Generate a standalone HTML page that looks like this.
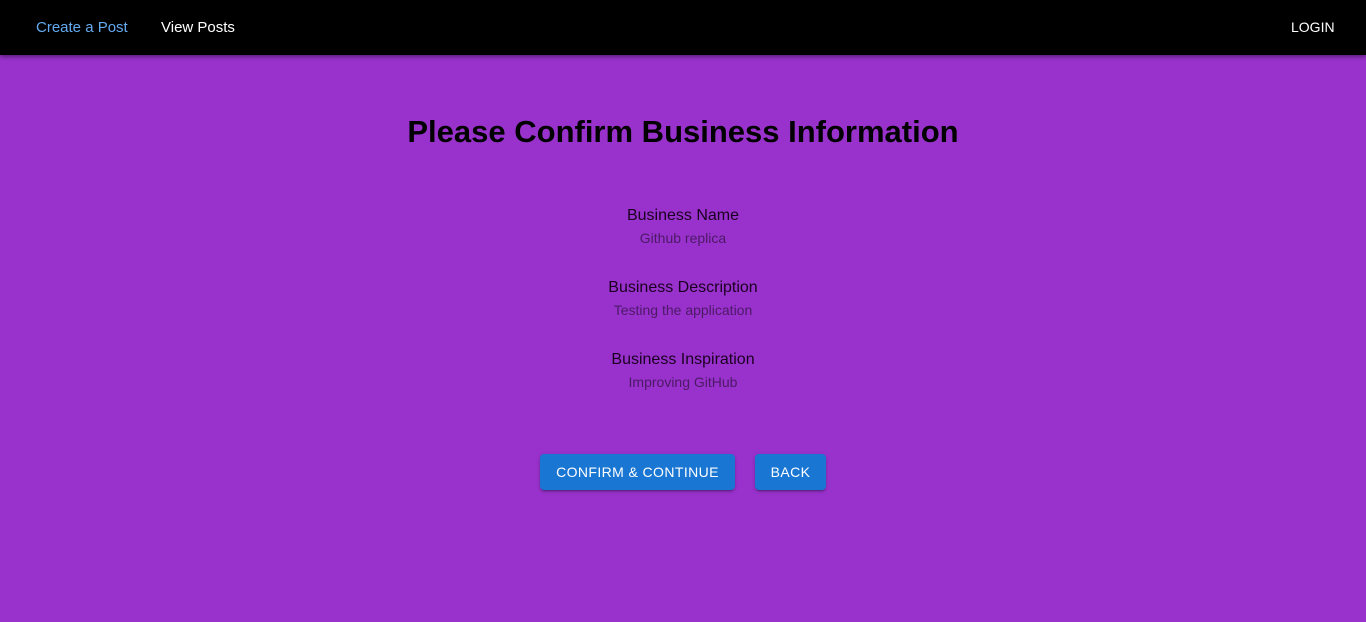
<!DOCTYPE html>
<html><head><style>
body{margin:0;width:1366px;height:622px;background:#9932cc;font-family:"Liberation Sans",sans-serif;overflow:hidden;position:relative}
.nav{position:absolute;top:0;left:0;width:1366px;height:55px;background:#000;box-shadow:0 2px 4px rgba(0,0,0,.4)}
.nav span{position:absolute;top:19px;font-size:15px}
h1{position:absolute;top:114px;left:0;width:1366px;margin:0;text-align:center;font-size:31px;font-weight:bold;color:#000}
.g{position:absolute;left:0;width:1366px;text-align:center}
.l{font-size:16px;color:#1a0020;height:20px}
.v{font-size:14px;color:rgba(0,0,0,.5);margin-top:3px}
.b{position:absolute;top:454px;height:36px;background:#1976d2;color:#fff;font-size:14px;font-weight:500;letter-spacing:.4px;border-radius:4px;box-shadow:0 3px 1px -2px rgba(0,0,0,.2),0 2px 2px rgba(0,0,0,.14),0 1px 5px rgba(0,0,0,.12);display:flex;align-items:center;justify-content:center}
</style></head><body>
<div class="nav"><span style="left:36px;color:#64aaf0">Create a Post</span><span style="left:161px;color:#fff">View Posts</span><span style="left:1291px;color:#fff;font-size:14px;top:19px">LOGIN</span></div>
<h1>Please Confirm Business Information</h1>
<div class="g" style="top:207px"><div class="l">Business Name</div><div class="v">Github replica</div></div>
<div class="g" style="top:279px"><div class="l">Business Description</div><div class="v">Testing the application</div></div>
<div class="g" style="top:351px"><div class="l">Business Inspiration</div><div class="v">Improving GitHub</div></div>
<div class="b" style="left:540px;width:195px">CONFIRM &amp; CONTINUE</div>
<div class="b" style="left:755px;width:71px">BACK</div>
</body></html>
